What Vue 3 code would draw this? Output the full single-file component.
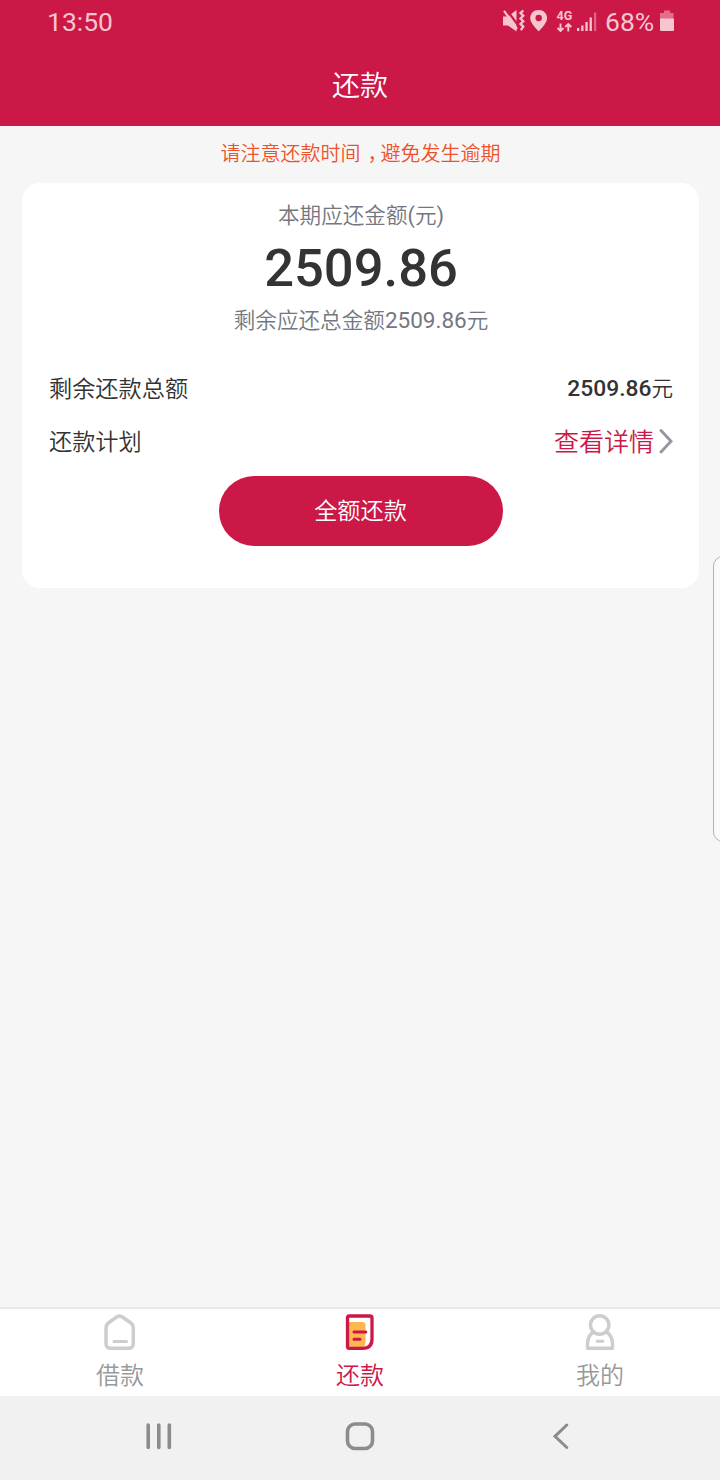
<script setup>
const tabs = [
  { id: 'loan', label: '借款' },
  { id: 'repay', label: '还款', active: true },
  { id: 'mine', label: '我的' },
]
</script>

<template>
  <div class="screen">
    <header class="top">
      <div class="status">
        <span class="clock">13:50</span>
        <div class="indicators">
          <svg class="status-icons" width="98" height="30" viewBox="500 6 98 30" fill="#f6c5d0">
            <path d="M503 16.500h5l8.500-6.500v21.500l-8.500-6H503z" />
            <path d="M506 9l13 17.500" stroke="#cb1847" stroke-width="2.200" />
            <path d="M504 10.800l13 18.200" stroke="#f6c5d0" stroke-width="2.200" />
            <path d="M523.300 10.500l-2.800 2.600 2.800 2.700-2.800 2.700 2.800 2.700-2.800 2.700 2.800 2.700-2.500 3.600" fill="none" stroke="#f6c5d0" stroke-width="2.300" />
            <path fill-rule="evenodd" d="M538.700 10c-4.800 0-8.500 3.500-8.500 8.200 0 5.500 8.500 13 8.500 13s8.400-7.500 8.400-13c0-4.700-3.700-8.200-8.400-8.200zm0 4.800a3.200 3.200 0 1 1 0 6.400 3.200 3.200 0 0 1 0-6.400z" />
            <text x="556.500" y="20" class="network">4G</text>
            <path d="M560.500 23.500v7M557.500 28l3 3 3-3M568.300 31.500v-7M565.300 27l3-3 3 3" fill="none" stroke="#f6c5d0" stroke-width="1.900" />
            <path d="M577 28h2.300v3H577zM581.200 25.500h2.300V31h-2.300zM585.400 22h2.300v9h-2.300zM589.600 17.500h2.300V31h-2.300z" />
            <path d="M594 12.500h2.200V31H594z" opacity=".45" />
          </svg>
          <span class="percent">68%</span>
          <svg class="battery" width="16" height="22" viewBox="0 0 16 22" fill="#f6c5d0">
            <path d="M5 .5h6V3h3.500v6H1V3h4z" opacity=".5" />
            <path d="M1 8.500h14v11.500q0 1-1 1H2q-1 0-1-1z" />
          </svg>
        </div>
      </div>
      <h1 class="title">还款</h1>
    </header>

    <main class="content">
      <p class="notice">请注意还款时间<span class="comma">，</span>避免发生逾期</p>
      <section class="card">
        <p class="caption">本期应还金额<span class="paren">(</span>元<span class="paren">)</span></p>
        <p class="amount">2509.86</p>
        <p class="caption total">剩余应还总金额<span class="digits">2509.86</span>元</p>
        <div class="row">
          <span>剩余还款总额</span>
          <span class="value"><b>2509.86</b>元</span>
        </div>
        <div class="row">
          <span>还款计划</span>
          <a class="detail">查看详情
            <svg width="14" height="26" viewBox="0 0 14 26" fill="none" stroke="#9496a1" stroke-width="2.900" stroke-linecap="round">
              <path d="M2 2.500L12 13.200 2 24" />
            </svg>
          </a>
        </div>
        <button class="pay">全额还款</button>
      </section>
    </main>

    <div class="edge-handle"></div>

    <nav class="tabs">
      <div v-for="tab in tabs" :key="tab.id" class="tab" :class="{ active: tab.active }">
        <svg v-if="tab.id === 'loan'" width="40" height="38" viewBox="0 0 40 38" fill="none" stroke="#cdcdcd" stroke-width="3.500" stroke-linejoin="round" stroke-linecap="round">
          <path d="M17 2.800Q19.500 1.200 22 2.800L31 9Q33.300 10.800 33.300 13.500V29.500Q33.300 34.300 28.500 34.300H10.800Q6 34.300 6 29.500V13.500Q6 10.800 8.300 9z" />
          <path d="M14 27.500h12.500" stroke-width="3" />
        </svg>
        <svg v-else-if="tab.id === 'repay'" width="40" height="38" viewBox="0 0 40 38" fill="none" stroke-linejoin="round" stroke-linecap="round">
          <path d="M8 8h14.500q3 0 3 3v16.500q0 6-4 6H8z" fill="#feb74f" />
          <path d="M9 2h21q2 0 2 2v21q0 9.300-9.300 9.300H9q-1.500 0-1.500-1.500V3.500Q7.500 2 9 2z" stroke="#cb1847" stroke-width="3.300" />
          <path d="M14 18h11.800M14 25.200h6" stroke="#cb1847" stroke-width="3" />
        </svg>
        <svg v-else width="40" height="38" viewBox="0 0 40 38" fill="none" stroke="#cdcdcd" stroke-width="3.400" stroke-linejoin="round" stroke-linecap="round">
          <circle cx="19.700" cy="11" r="9.200" />
          <path d="M13.300 18C9 21 7.500 25 7.500 30v4.300h25V30c0-5-1.500-9-5.800-12" />
          <path d="M17.300 27.300h5.500" stroke-width="3" />
        </svg>
        <span>{{ tab.label }}</span>
      </div>
    </nav>

    <footer class="system">
      <svg width="720" height="84" viewBox="0 0 720 84" fill="none" stroke="#8c8c8c" stroke-width="3.600" stroke-linecap="round">
        <path d="M148.200 29v22.500M158.800 29v22.500M169.300 29v22.500" />
        <rect x="347.500" y="28" width="25" height="24.500" rx="7.500" />
        <path d="M566.800 29L555 40.300l11.800 11.200" stroke-width="3" />
      </svg>
    </footer>
  </div>
</template>

<style>
body {
  margin: 0;
  background: #f5f5f5;
}
</style>

<style scoped>
.screen {
  position: relative;
  display: flex;
  flex-direction: column;
  width: 720px;
  height: 1480px;
  overflow: hidden;
  background: #f6f6f6;
  color: #333;
  font-family: Roboto, "Noto Sans CJK SC", sans-serif;
  font-weight: 350;
}
p,
h1 {
  margin: 0;
}
.top {
  height: 126px;
  background: #cb1847;
}
.status {
  display: flex;
  justify-content: space-between;
  height: 44px;
  padding: 0 45px 0 47px;
  color: #f6c5d0;
  font-size: 26.500px;
  font-weight: 400;
  line-height: 44px;
}
.indicators {
  display: flex;
}
.status-icons {
  margin-top: 6px;
}
.network {
  font: 700 12.500px Roboto, sans-serif;
}
.percent {
  width: 55px;
  padding-left: 7px;
  box-sizing: border-box;
}
.battery {
  margin: 10px 0 0 6px;
}
.title {
  padding-top: 2px;
  color: #fff;
  font-size: 28px;
  font-weight: 350;
  line-height: 82px;
  text-align: center;
}
.content {
  flex: 1;
  padding: 0 21px 0 22px;
}
.notice {
  height: 57px;
  color: #ee522b;
  font-size: 20px;
  line-height: 57px;
  text-align: center;
}
.comma {
  display: inline-block;
  box-sizing: border-box;
  width: 20px;
  padding-left: 7px;
  line-height: 20px;
  text-align: left;
  font-feature-settings: "halt";
}
.card {
  display: flex;
  flex-direction: column;
  box-sizing: border-box;
  height: 405px;
  padding: 16px 26px 0 27px;
  border-radius: 18px;
  background: #fff;
}
.caption {
  color: #74777f;
  font-size: 21.600px;
  line-height: 34px;
  text-align: center;
}
.digits {
  font-size: 22.500px;
  font-weight: 400;
}
.paren {
  font-weight: 400;
}
.amount {
  font-size: 52.500px;
  font-weight: 500;
  line-height: 70px;
  text-align: center;
}
.total {
  margin-bottom: 22px;
}
.row {
  display: flex;
  justify-content: space-between;
  align-items: center;
  height: 53px;
  font-size: 23.200px;
}
.value {
  font-size: 21.600px;
}
.value b {
  font-size: 22.800px;
  font-weight: 500;
}
.detail {
  display: flex;
  align-items: center;
  gap: 5px;
  color: #cb1847;
  font-size: 25px;
}
.detail svg {
  margin-top: 3px;
}
.pay {
  align-self: center;
  width: 284px;
  height: 70px;
  margin: 9.500px 1px 0 0;
  padding: 0 0 3px;
  border: 0;
  border-radius: 35px;
  background: #cb1847;
  color: #fff;
  font-family: inherit;
  font-size: 23.200px;
  font-weight: 350;
}
.edge-handle {
  position: absolute;
  top: 556px;
  left: 713px;
  box-sizing: border-box;
  width: 20px;
  height: 286px;
  border: 1.500px solid #b3b3b3;
  border-radius: 10px;
  background: #fafafa;
}
.tabs {
  display: flex;
  box-sizing: border-box;
  height: 89.500px;
  border-top: 2px solid #e8e8e8;
  background: #fff;
}
.tab {
  display: flex;
  flex: 1;
  flex-direction: column;
  align-items: center;
  padding-top: 5.500px;
  color: #999;
  font-size: 24px;
  line-height: 49px;
}
.tab svg {
  flex: none;
}
.active {
  color: #cb1847;
}
.system {
  height: 84px;
  background: #f1f1f1;
}
.system svg {
  display: block;
}
</style>
